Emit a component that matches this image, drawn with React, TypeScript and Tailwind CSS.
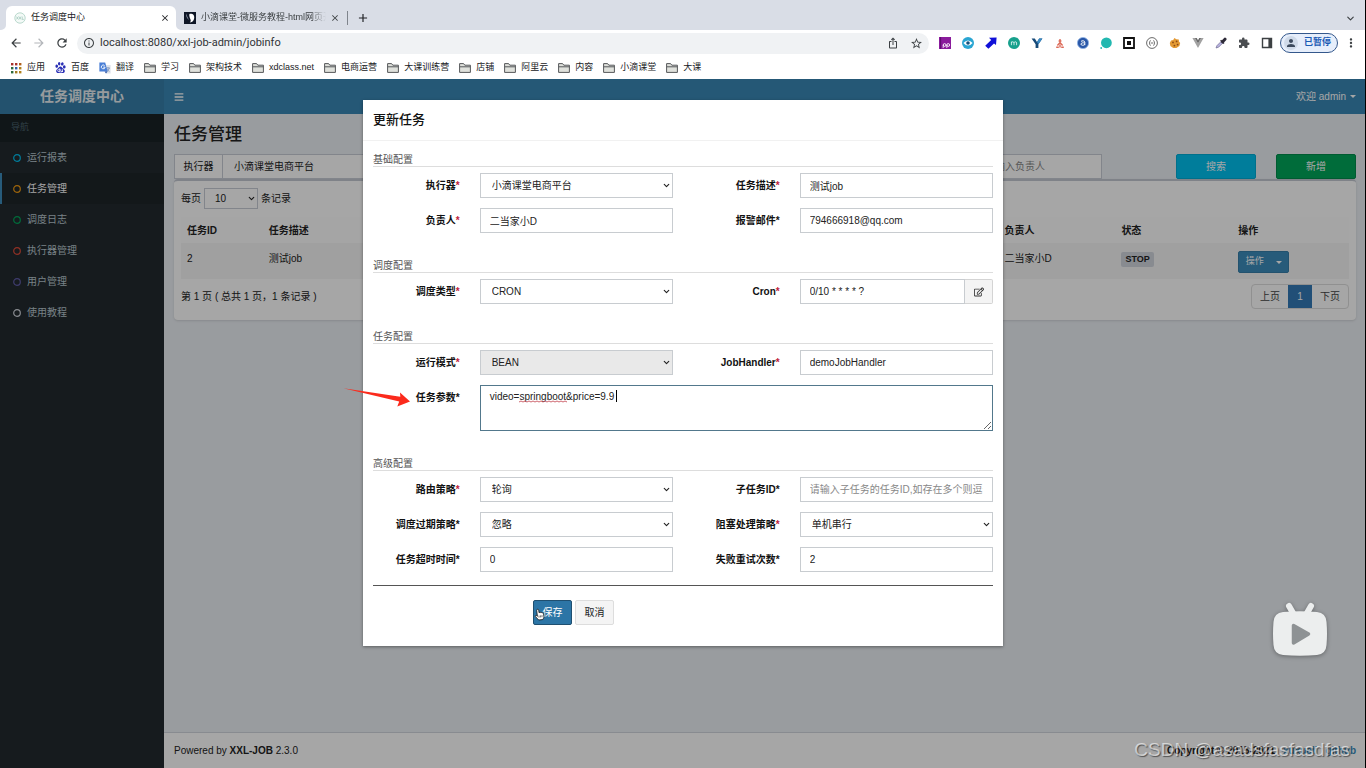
import React from "react";
import { FaBars, FaRegEdit } from "react-icons/fa";
import {
  MdAdd,
  MdArrowBack,
  MdArrowForward,
  MdClose,
  MdExtension,
  MdInfoOutline,
  MdIosShare,
  MdMoreVert,
  MdPerson,
  MdRefresh,
  MdStarBorder,
} from "react-icons/md";
import { SiBaidu } from "react-icons/si";
import { ChevronDown } from "lucide-react";

const bookmarks = [
  { name: "应用", icon: "apps" },
  { name: "百度", icon: "baidu" },
  { name: "翻译", icon: "translate" },
  { name: "学习", icon: "folder" },
  { name: "架构技术", icon: "folder" },
  { name: "xdclass.net", icon: "folder" },
  { name: "电商运营", icon: "folder" },
  { name: "大课训练营", icon: "folder" },
  { name: "店铺", icon: "folder" },
  { name: "阿里云", icon: "folder" },
  { name: "内容", icon: "folder" },
  { name: "小滴课堂", icon: "folder" },
  { name: "大课", icon: "folder" },
];

const menu = [
  { name: "运行报表", color: "text-[#00c0ef]" },
  { name: "任务管理", color: "text-[#f39c12]", active: true },
  { name: "调度日志", color: "text-[#00a65a]" },
  { name: "执行器管理", color: "text-[#dd4b39]" },
  { name: "用户管理", color: "text-[#605ca8]" },
  { name: "使用教程", color: "text-[#d2d6de]" },
];

const inputClass =
  "block h-[25px] w-full min-w-0 border border-[#c8ccd0] bg-white px-[9px] text-[10px] text-[#222] outline-none placeholder:text-[#888]";

const FolderIcon = () => (
  <svg viewBox="0 0 12 12" className="h-3 w-3">
    <path
      d="M.6 10.4V1.6h4l1.2 1.6h5.6v7.2z"
      fill="#dfe1dc"
      stroke="#55585a"
      strokeWidth="1"
      strokeLinejoin="round"
    />
    <path d="M.8 4.8h10.4" stroke="#55585a" strokeWidth="1" />
  </svg>
);

const AppsIcon = () => {
  const colors = [
    "#a8322c", "#a8322c", "#b0601c",
    "#2b6a3c", "#2f5fa8", "#b0801c",
    "#2b6a3c", "#a07a22", "#b0801c",
  ];
  return (
    <svg viewBox="0 0 12 12" className="h-3 w-3">
      {colors.map((c, i) => (
        <rect
          key={i}
          x={1 + (i % 3) * 4}
          y={1 + Math.floor(i / 3) * 4}
          width="2.4"
          height="2.4"
          fill={c}
        />
      ))}
    </svg>
  );
};

const TranslateIcon = () => (
  <svg viewBox="0 0 12 12" className="h-3 w-3">
    <path d="M5 3h6.600v8.600H7z" fill="#dfe3ea" />
    <path
      d="M7 6h4M9 5.200V6M10.300 6c-.4 1.500-1.500 2.800-2.800 3.400M7.800 6.800c.5 1 1.400 2 2.600 2.600"
      stroke="#6d87b4"
      strokeWidth=".7"
      fill="none"
    />
    <path d="M.4.4h5.800l2.400 9.200H.4z" fill="#4a7fd6" />
    <path
      d="M5.600 3.600a1.900 1.900 0 1 0 .5 1.500H4.200"
      stroke="#fff"
      strokeWidth=".9"
      fill="none"
    />
    <path d="M5.600 9.600h3L7 11.600z" fill="#2f56a8" />
  </svg>
);

const BookmarkIcon = ({ icon }: { icon: string }) => {
  if (icon === "apps") return <AppsIcon />;
  if (icon === "baidu") return <SiBaidu size={11} color="#2a2fb5" />;
  if (icon === "translate") return <TranslateIcon />;
  return <FolderIcon />;
};

const Extensions = () => (
  <>
    <svg viewBox="0 0 12 12" className="h-3 w-3">
      <path d="M0 0h12v12H0z" fill="#8a1c9c" />
      <path d="M1.600 0v12" stroke="#4c0d5c" strokeWidth=".8" />
      <circle cx="5.6" cy="8" r="1.4" fill="none" stroke="#fff" strokeWidth=".9" />
      <circle cx="9.2" cy="8" r="1.4" fill="none" stroke="#fff" strokeWidth=".9" />
      <path d="M4.200 8v3M7.800 8v3" stroke="#fff" strokeWidth=".8" />
    </svg>
    <svg viewBox="0 0 12 12" className="h-3 w-3">
      <circle cx="6" cy="6" r="6" fill="#2aa5d2" />
      <path d="M1.400 6Q6 .8 10.600 6 6 11.200 1.400 6z" fill="#fff" />
      <circle cx="6" cy="6" r="1.8" fill="#14507c" />
    </svg>
    <svg viewBox="0 0 12 12" className="h-3 w-3">
      <path d="M4 .8 11.600.4 11 8 9 6.400 3.400 11.800.2 8.800 6.200 3z" fill="#1010d8" />
    </svg>
    <svg viewBox="0 0 12 12" className="h-3 w-3">
      <circle cx="6" cy="6" r="6" fill="#17a08c" />
      <path
        d="M3.400 8.200V4.600M3.400 5.800c.2-1.300 2.600-1.500 2.600.2v2.200M6 5.800c.2-1.300 2.600-1.500 2.600.2v2.200"
        stroke="#d8f3ee"
        strokeWidth=".9"
        fill="none"
      />
    </svg>
    <svg viewBox="0 0 12 12" className="h-3 w-3">
      <path d="M.6 1.400h3.200L6 5l2.200-3.600h3.200L7.400 7.200V11H4.600V7.200z" fill="#174a78" />
      <path d="m6 5 2.200-3.600h3.200L7.400 7.200z" fill="#3b8ac4" />
    </svg>
    <svg viewBox="0 0 12 12" className="h-3 w-3">
      <path
        d="M6 2v4M3.400 8.400 6 5.600l2.600 2.800M4.600 4h2.800M2.200 10.200h2.600M7.200 10.200h2.600M6 7.600v3"
        stroke="#dc6a58"
        strokeWidth="1.4"
        fill="none"
      />
    </svg>
    <svg viewBox="0 0 12 12" className="h-3 w-3">
      <circle cx="6" cy="6" r="5.6" fill="#2a58a8" stroke="#8fb2e4" strokeWidth=".8" />
      <path
        d="M4 4.400c1-1 3.800-.8 3.800.8v3M7.800 6C6 5.600 4 5.800 4 7.200s2.800 1.400 3.800.2"
        stroke="#fff"
        strokeWidth="1"
        fill="none"
      />
    </svg>
    <svg viewBox="0 0 12 12" className="h-3 w-3">
      <circle cx="6.4" cy="5.8" r="5.4" fill="#22b8b0" />
      <circle cx="1.2" cy="11" r=".9" fill="#22b8b0" />
    </svg>
    <svg viewBox="0 0 12 12" className="h-3 w-3">
      <path d="M1 1h10v10H1z" fill="#fff" stroke="#111" strokeWidth="1.8" />
      <path d="M4 4h4v4H4z" fill="#111" />
    </svg>
    <svg viewBox="0 0 12 12" className="h-3 w-3">
      <circle cx="6" cy="6" r="5.4" fill="#fff" stroke="#444" strokeWidth=".8" />
      <path
        d="M4.600 3.600c-1 0-.7 1-.8 1.600 0 .5-.4.8-.8.8.4 0 .8.3.8.8.1.6-.2 1.600.8 1.600M7.400 3.600c1 0 .7 1 .8 1.600 0 .5.4.8.8.8-.4 0-.8.3-.8.8-.1.6.2 1.600-.8 1.600M5 6h2"
        stroke="#444"
        strokeWidth=".8"
        fill="none"
      />
    </svg>
    <svg viewBox="0 0 12 12" className="h-3 w-3">
      <path
        d="M2 3.600 4.200 3 5.400 1l2 1.200 2.400.2.2 2.200L11.200 6l-.8 3-3 2H4.200L1.400 9 .8 6z"
        fill="#e39a35"
      />
      <circle cx="4" cy="5.4" r=".9" fill="#8c4a14" />
      <circle cx="7.6" cy="4.4" r=".9" fill="#8c4a14" />
      <circle cx="5.4" cy="8.6" r=".9" fill="#8c4a14" />
      <circle cx="8.6" cy="7.6" r=".9" fill="#8c4a14" />
    </svg>
    <svg viewBox="0 0 12 12" className="h-3 w-3">
      <path d="M.4 1h2.400L6 6.600 9.200 1h2.400L6 11z" fill="#a2a2a2" />
      <path d="M2.800 1h2L6 3.200 7.200 1h2L6 6.600z" fill="#6c6c6c" />
    </svg>
    <svg viewBox="0 0 12 12" className="h-3 w-3">
      <path d="M1 11 2 8.600l4.600-4.600 1.600 1.600-4.600 4.600z" fill="#b9b4e0" stroke="#6e6a92" strokeWidth=".7" />
      <path d="m5.600 3.200 3.400 3.400" stroke="#2d2a38" strokeWidth="1.4" />
      <path d="m7.600 4.800 2.400-2.600" stroke="#2d2a38" strokeWidth="3" strokeLinecap="round" />
    </svg>
    <MdExtension size={12} color="#4a4d51" />
    <svg viewBox="0 0 12 12" className="h-3 w-3">
      <path d="M1.500 1.500h9v9h-9z" fill="#fff" stroke="#3c4043" strokeWidth="1.4" />
      <path d="M7.400 1.500h3.100v9H7.400z" fill="#3c4043" />
    </svg>
  </>
);

const BrowserBar = () => (
  <header className="bg-white text-[#3c4043]">
    <div className="flex h-[30px] items-end bg-[#d9dde6]">
      <div className="relative ml-[6px] flex h-6 w-[170px] items-center rounded-t-md bg-white pr-[6px] pl-2">
        <svg viewBox="0 0 12 12" className="h-3 w-3">
          <circle cx="6" cy="6" r="5.2" fill="#f4faf7" stroke="#a9cfc2" strokeWidth=".8" />
          <path
            d="m2.400 4.600 2 2.800m0-2.800-2 2.800M5 4.600l2 2.800m0-2.800L5 7.400M8.200 4.600v2.800h1.600"
            stroke="#8dbcae"
            strokeWidth=".6"
            fill="none"
          />
        </svg>
        <span className="ml-[5px] flex-1 text-[9px] text-[#202124]">任务调度中心</span>
        <button aria-label="关闭标签页" className="text-[#202124]">
          <MdClose size={10} />
        </button>
        <svg viewBox="0 0 5 5" className="absolute bottom-0 -left-[5px] h-[5px] w-[5px]">
          <path d="M5 0v5H0a5 5 0 0 0 5-5z" fill="#fff" />
        </svg>
        <svg viewBox="0 0 5 5" className="absolute -right-[5px] bottom-0 h-[5px] w-[5px]">
          <path d="M0 0v5h5a5 5 0 0 1-5-5z" fill="#fff" />
        </svg>
      </div>
      <div className="flex h-6 w-[171px] items-center pr-[7px] pl-2">
        <svg viewBox="0 0 12 12" className="h-3 w-3 shrink-0">
          <path d="M0 0h12v12H0z" fill="#0e1626" />
          <path
            d="M2 1.600C1.800 4.400 3 6.600 5 8L3.400 4.800z"
            fill="#8b93a3"
          />
          <path
            d="M5.400 2c1-.6 3-.4 4 .8 1.200 1.600 1.200 4.200-.2 6-.8 1-2 1.600-3.400 1.600 1-1 1.200-2 .6-3.200C5.600 5.600 5 3.600 5.400 2z"
            fill="#fff"
          />
        </svg>
        <span className="ml-[5px] flex-1 overflow-hidden text-[9px] whitespace-nowrap [mask-image:linear-gradient(to_right,#000_88%,transparent)]">
          小滴课堂-微服务教程-html网页开
        </span>
        <button aria-label="关闭标签页" className="ml-1">
          <MdClose size={10} />
        </button>
      </div>
      <span className="mb-[5px] h-[14px] w-px bg-[#7f848c]" />
      <button aria-label="新标签页" className="flex h-6 items-center px-2 text-[#202124]">
        <MdAdd size={14} />
      </button>
      <button aria-label="搜索标签页" className="mr-[10px] ml-auto flex h-6 items-center">
        <ChevronDown size={11} strokeWidth={2.5} />
      </button>
    </div>

    <div className="flex h-[26px] items-center pr-2 pl-[9px]">
      <div className="flex items-center gap-[9px]">
        <button aria-label="后退">
          <MdArrowBack size={14} />
        </button>
        <button aria-label="前进" className="text-[#b3b6ba]">
          <MdArrowForward size={14} />
        </button>
        <button aria-label="重新加载">
          <MdRefresh size={14} />
        </button>
      </div>
      <div className="ml-2 flex h-[21px] min-w-0 flex-1 items-center rounded-full bg-[#f0f2f4] px-[6px]">
        <MdInfoOutline size={12} />
        <input
          aria-label="地址"
          className="ml-[5px] min-w-0 flex-1 bg-transparent font-[Roboto,'Noto_Sans_CJK_SC',sans-serif] text-[11px] text-[#303336] outline-none"
          defaultValue="localhost:8080/xxl-job-admin/jobinfo"
        />
        <div className="flex items-center gap-[11px]">
          <MdIosShare size={12} />
          <MdStarBorder size={13} />
        </div>
      </div>
      <div className="ml-[10px] flex items-center gap-[11px]">
        <Extensions />
      </div>
      <button className="ml-[7px] flex h-5 w-[58px] items-center justify-between rounded-full border border-[#34588c] bg-[#e6eefb] pr-[6px] pl-[3px] text-[9px] font-bold text-[#1b5bb5]">
        <span className="rounded-full bg-[#cfdae9] p-px text-[#3c4a5e]">
          <MdPerson size={12} />
        </span>
        已暂停
      </button>
      <button aria-label="菜单" className="ml-[6px]">
        <MdMoreVert size={14} />
      </button>
    </div>

    <nav className="flex h-[23px] items-center gap-[10px] pl-[10px]">
      {bookmarks.map((b) => (
        <a
          key={b.name}
          href="#"
          className="flex items-center gap-[5px] text-[9px] whitespace-nowrap text-[#202124]"
        >
          <BookmarkIcon icon={b.icon} />
          {b.name}
        </a>
      ))}
    </nav>
  </header>
);

const Sidebar = () => (
  <aside className="w-[164px] shrink-0 bg-[#232a2f]">
    <a
      href="#"
      className="flex h-[35px] items-center justify-center bg-[#367fa9] text-[14px] font-bold text-[#e8eef2]"
    >
      任务调度中心
    </a>
    <p className="flex h-7 items-center bg-[#1a2226] pl-[11px] text-[9px] text-[#4b646f]">导航</p>
    <ul>
      {menu.map((m) => (
        <li key={m.name}>
          <a
            href="#"
            className={
              m.active
                ? "flex h-[31px] items-center gap-[6px] border-l-2 border-[#3c8dbc] bg-[#1e2529] pl-[11px] text-[10px] text-white"
                : "flex h-[31px] items-center gap-[6px] border-l-2 border-transparent pl-[11px] text-[10px] text-[#b8c7ce]"
            }
          >
            <svg viewBox="0 0 8 8" className={`h-2 w-2 ${m.color}`}>
              <circle cx="4" cy="4" r="3.3" fill="none" stroke="currentColor" strokeWidth="1.2" />
            </svg>
            {m.name}
          </a>
        </li>
      ))}
    </ul>
  </aside>
);

const Content = () => (
  <div className="flex min-w-0 flex-1 flex-col bg-[#ecf0f5]">
    <div className="flex h-[35px] items-center justify-between bg-[#3a88b6] px-[10px] text-[10px] text-white">
      <button aria-label="切换导航">
        <FaBars size={10} />
      </button>
      <button className="flex items-center gap-1">
        欢迎 admin
        <span className="border-x-[3px] border-t-[3px] border-x-transparent border-t-white" />
      </button>
    </div>

    <main className="flex-1 px-[10px] pt-[9px] text-[10px] text-[#222]">
      <h1 className="text-[17px] leading-6 font-medium">任务管理</h1>
      <div className="mt-[7px] flex">
        <div className="flex w-[24%]">
          <label
            htmlFor="filterGroup"
            className="flex h-[25px] w-12 shrink-0 items-center justify-center border border-r-0 border-[#c8ccd6] bg-white"
          >
            执行器
          </label>
          <select
            id="filterGroup"
            className="h-[25px] w-full appearance-none border border-[#c8ccd6] bg-white pl-[11px] outline-none"
          >
            <option>小滴课堂电商平台</option>
          </select>
        </div>
        <input
          aria-label="负责人"
          placeholder="请输入负责人"
          className="ml-auto h-[25px] w-[127px] border border-[#c8ccd6] bg-white px-[9px] outline-none placeholder:text-[#888]"
        />
        <button className="ml-[74px] h-[25px] w-20 rounded-xs border border-[#00acd6] bg-[#00c0ef] text-white">
          搜索
        </button>
        <button className="ml-5 h-[25px] w-20 rounded-xs border border-[#008d4c] bg-[#00a65a] text-white">
          新增
        </button>
      </div>

      <section className="rounded-sm border-t-2 border-[#c4c8d2] bg-white px-[7px] pt-[7px] pb-[11px] shadow-sm">
        <div className="flex items-center gap-[3px]">
          <label htmlFor="pageSize">每页</label>
          <span className="relative">
            <select
              id="pageSize"
              className="block h-[21px] w-[54px] appearance-none border border-[#c8ccd6] bg-white pl-[10px] outline-none"
            >
              <option>10</option>
            </select>
            <ChevronDown
              size={9}
              strokeWidth={3}
              className="pointer-events-none absolute top-[6px] right-[2px]"
            />
          </span>
          条记录
        </div>
        <table className="mt-2 w-full table-fixed text-left">
          <thead className="bg-[#fdfdfd]">
            <tr className="h-[26px]">
              <th className="w-[7%] px-[6px]">任务ID</th>
              <th className="w-[63%] px-[6px]">任务描述</th>
              <th className="w-[10%] px-[6px]">负责人</th>
              <th className="w-[10%] px-[6px]">状态</th>
              <th className="px-[6px]">操作</th>
            </tr>
          </thead>
          <tbody>
            <tr className="h-9 bg-[#f6f6f6] align-top">
              <td className="px-[6px] pt-2">2</td>
              <td className="px-[6px] pt-2">测试job</td>
              <td className="px-[6px] pt-2">二当家小D</td>
              <td className="px-[6px] pt-2">
                <span className="inline-block h-[15px] rounded-xs bg-[#d2d6de] px-1 text-[9px] leading-[15px] font-bold">
                  STOP
                </span>
              </td>
              <td className="px-[6px] pt-2">
                <div className="flex h-[22px] w-[51px] rounded-xs border border-[#367fa9] bg-[#3c8dbc] text-[9px] text-white">
                  <button className="w-8">操作</button>
                  <button aria-label="展开操作" className="flex w-[18px] items-center justify-center">
                    <span className="border-x-[3px] border-t-[3px] border-x-transparent border-t-white" />
                  </button>
                </div>
              </td>
            </tr>
          </tbody>
        </table>
        <div className="mt-[5px] flex items-center justify-between">
          <p>第 1 页 ( 总共 1 页，1 条记录 )</p>
          <div className="flex h-[25px] rounded-sm border border-[#ddd] text-[#444]">
            <button className="px-2">上页</button>
            <button className="w-6 bg-[#337ab7] text-white">1</button>
            <button className="px-2">下页</button>
          </div>
        </div>
      </section>
    </main>

    <footer className="flex h-9 items-center justify-between border-t border-[#d2d6de] bg-white px-[10px] text-[10px] text-[#222]">
      <p>
        Powered by <b>XXL-JOB</b> 2.3.0
      </p>
      <p className="flex gap-2 font-bold">
        Copyright © 2015-2021
        <a href="#" className="text-[#3c8dbc]">xuxueli</a>
        <a href="#" className="text-[#3c8dbc]">github</a>
      </p>
    </footer>
  </div>
);

type FieldProps = {
  id: string;
  label: string;
  required?: boolean;
  wide?: boolean;
  children: React.ReactNode;
};

const Field = ({ id, label, required, wide, children }: FieldProps) => (
  <>
    <label htmlFor={id} className="col-span-2 px-[10px] text-right leading-[25px] font-bold text-[#111]">
      {label}
      <span className={required ? "text-[#c0223b]" : "text-[#111]"}>*</span>
    </label>
    <div className={wide ? "relative col-span-10 px-[10px]" : "col-span-4 px-[10px]"}>{children}</div>
  </>
);

const Select = ({ id, value, disabled }: { id: string; value: string; disabled?: boolean }) => (
  <div className="relative">
    <select
      id={id}
      disabled={disabled}
      className="block h-[25px] w-full appearance-none border border-[#c8ccd0] bg-white pl-[11px] text-[10px] text-[#222] outline-none disabled:bg-[#e9e9e9] disabled:opacity-100"
    >
      <option>{value}</option>
    </select>
    <ChevronDown
      size={9}
      strokeWidth={3}
      className="pointer-events-none absolute top-2 right-[2px] text-[#222]"
    />
  </div>
);

const Section = ({ title, children }: { title: string; children: React.ReactNode }) => (
  <fieldset>
    <legend className="w-full px-[10px]">
      <span className="block border-b border-[#ddd] pt-px leading-[13px] text-[#555]">{title}</span>
    </legend>
    <div className="mt-[6px] grid grid-cols-12 gap-y-[10px]">{children}</div>
  </fieldset>
);

const JobDialog = () => (
  <div
    role="dialog"
    aria-labelledby="dialogTitle"
    className="w-full max-w-[640px] bg-white text-[10px] shadow-[0_1px_3px_rgba(0,0,0,0.4)]"
  >
    <div className="border-b border-[#f1f1f1] px-[10px] py-[10px]">
      <h2 id="dialogTitle" className="text-[13px] leading-5 font-medium text-[#111]">
        更新任务
      </h2>
    </div>
    <form className="pt-[11px] pb-[21px]">
      <div className="flex flex-col gap-[25px]">
        <Section title="基础配置">
          <Field id="group" label="执行器" required>
            <Select id="group" value="小滴课堂电商平台" />
          </Field>
          <Field id="desc" label="任务描述" required>
            <input id="desc" className={inputClass} defaultValue="测试job" />
          </Field>
          <Field id="author" label="负责人" required>
            <input id="author" className={inputClass} defaultValue="二当家小D" />
          </Field>
          <Field id="email" label="报警邮件">
            <input id="email" className={inputClass} defaultValue="794666918@qq.com" />
          </Field>
        </Section>

        <Section title="调度配置">
          <Field id="scheduleType" label="调度类型" required>
            <Select id="scheduleType" value="CRON" />
          </Field>
          <Field id="cron" label="Cron" required>
            <div className="flex">
              <input id="cron" className={inputClass} defaultValue="0/10 * * * * ?" />
              <button
                type="button"
                aria-label="编辑 Cron"
                className="flex w-7 shrink-0 items-center justify-center rounded-r-xs border border-l-0 border-[#d4d4d4] bg-[#f4f4f4] text-[#333]"
              >
                <FaRegEdit size={10} />
              </button>
            </div>
          </Field>
        </Section>

        <Section title="任务配置">
          <Field id="glueType" label="运行模式" required>
            <Select id="glueType" value="BEAN" disabled />
          </Field>
          <Field id="handler" label="JobHandler" required>
            <input id="handler" className={inputClass} defaultValue="demoJobHandler" />
          </Field>
          <Field id="param" label="任务参数" wide>
            <textarea
              id="param"
              spellCheck={false}
              className="block h-[46px] w-full border border-[#52788c] bg-white px-[9px] py-1 text-[10px] leading-[14px] text-[#222] outline-none"
              defaultValue="video=springboot&price=9.9"
            />
            {/* spelling squiggle and text caret */}
            <svg viewBox="0 0 50 3" className="pointer-events-none absolute top-[15px] left-[49px] h-[3px] w-[50px]">
              <path
                d="M0 2l2-1 2 1 2-1 2 1 2-1 2 1 2-1 2 1 2-1 2 1 2-1 2 1 2-1 2 1 2-1 2 1 2-1 2 1 2-1 2 1 2-1 2 1 2-1 2 1"
                stroke="#c8555f"
                strokeWidth=".9"
                fill="none"
              />
            </svg>
            <span className="pointer-events-none absolute top-[5px] left-[146px] h-3 w-px bg-black" />
            {/* red pointer arrow */}
            <svg viewBox="0 0 68 20" className="pointer-events-none absolute top-[2px] -left-[127px] h-5 w-[68px]">
              <path d="M.3 1.300 57.300 9.700 57 5.600 67 14.600 54.300 19.400 56.200 14.400z" fill="#fb2a1c" />
            </svg>
          </Field>
        </Section>

        <Section title="高级配置">
          <Field id="route" label="路由策略" required>
            <Select id="route" value="轮询" />
          </Field>
          <Field id="childId" label="子任务ID">
            <input
              id="childId"
              className={inputClass}
              placeholder="请输入子任务的任务ID,如存在多个则逗号分隔"
            />
          </Field>
          <Field id="misfire" label="调度过期策略">
            <Select id="misfire" value="忽略" />
          </Field>
          <Field id="block" label="阻塞处理策略" required>
            <Select id="block" value="单机串行" />
          </Field>
          <Field id="timeout" label="任务超时时间">
            <input id="timeout" className={inputClass} defaultValue="0" />
          </Field>
          <Field id="retry" label="失败重试次数">
            <input id="retry" className={inputClass} defaultValue="2" />
          </Field>
        </Section>
      </div>

      <hr className="mx-[10px] mt-[13px] border-[#555]" />
      <div className="mt-[14px] ml-[170px] flex gap-[3px]">
        <button
          type="button"
          className="relative h-[25px] w-[39px] rounded-xs border border-[#1f4f70] bg-[#2c75a6] text-white"
        >
          保存
          <svg viewBox="0 0 12 14" className="absolute top-[7px] left-0 h-[14px] w-3">
            <path
              d="M3.200 1.400c.8-.5 1.400.1 1.500.8l.4 2.600.6-.4c.5-.3 1 0 1.200.3.4-.3 1-.2 1.300.2.7-.2 1.300.1 1.400.9l.3 2.600c.1 1.400-.6 2.200-1.200 3.200l-4 .4c-1-1.600-2.600-2.200-3.400-3.600-.2-.8.6-1.200 1.200-.8l.9.7-.7-5.700c0-.5.1-.9.5-1.200z"
              fill="#fff"
              stroke="#111"
              strokeWidth=".8"
            />
            <path d="M5 7.600v2M6.600 7.400v2M8 7.200v2" stroke="#111" strokeWidth=".6" />
          </svg>
        </button>
        <button
          type="button"
          className="h-[25px] w-[39px] rounded-xs border border-[#ddd] bg-[#f4f4f4] text-[#222]"
        >
          取消
        </button>
      </div>
    </form>
  </div>
);

const VideoBadge = () => (
  <svg
    viewBox="0 0 56 56"
    className="absolute right-[38px] bottom-[110px] h-14 w-14 drop-shadow-[0_1px_2px_rgba(0,0,0,0.35)]"
  >
    <path
      d="m17 4 4 7M39 4l-4 7"
      stroke="#eceeee"
      strokeWidth="6"
      strokeLinecap="round"
    />
    <path
      d="M11 10Q28 8.500 45 10 54 11 54.500 20 55.500 32 54.500 43 54 52 45 53 28 54.500 11 53 2 52 1.500 43 .5 32 1.500 20 2 11 11 10z"
      fill="#eceeee"
    />
    <path
      d="M21.500 23.500v17.500l15-9z"
      fill="#8e9294"
      stroke="#8e9294"
      strokeWidth="3.500"
      strokeLinejoin="round"
    />
  </svg>
);

const App = () => {
  return (
    <div className="relative flex min-h-screen flex-col font-['Liberation_Sans','Noto_Sans_CJK_SC',sans-serif] leading-normal">
      <BrowserBar />
      <div className="relative flex flex-1">
        <Sidebar />
        <Content />
        <div className="absolute inset-0 flex items-start justify-center bg-black/35 pt-[21px]">
          <JobDialog />
        </div>
        <VideoBadge />
        <p className="pointer-events-none absolute right-4 bottom-1 text-[19px] leading-7 text-white/60 [text-shadow:1px_1px_1px_rgba(0,0,0,0.5)]">
          CSDN @asadsfasfasdfas
        </p>
      </div>
      {/* window edge */}
      <span className="absolute inset-y-0 right-0 w-px bg-black" />
    </div>
  );
};

export default App;
